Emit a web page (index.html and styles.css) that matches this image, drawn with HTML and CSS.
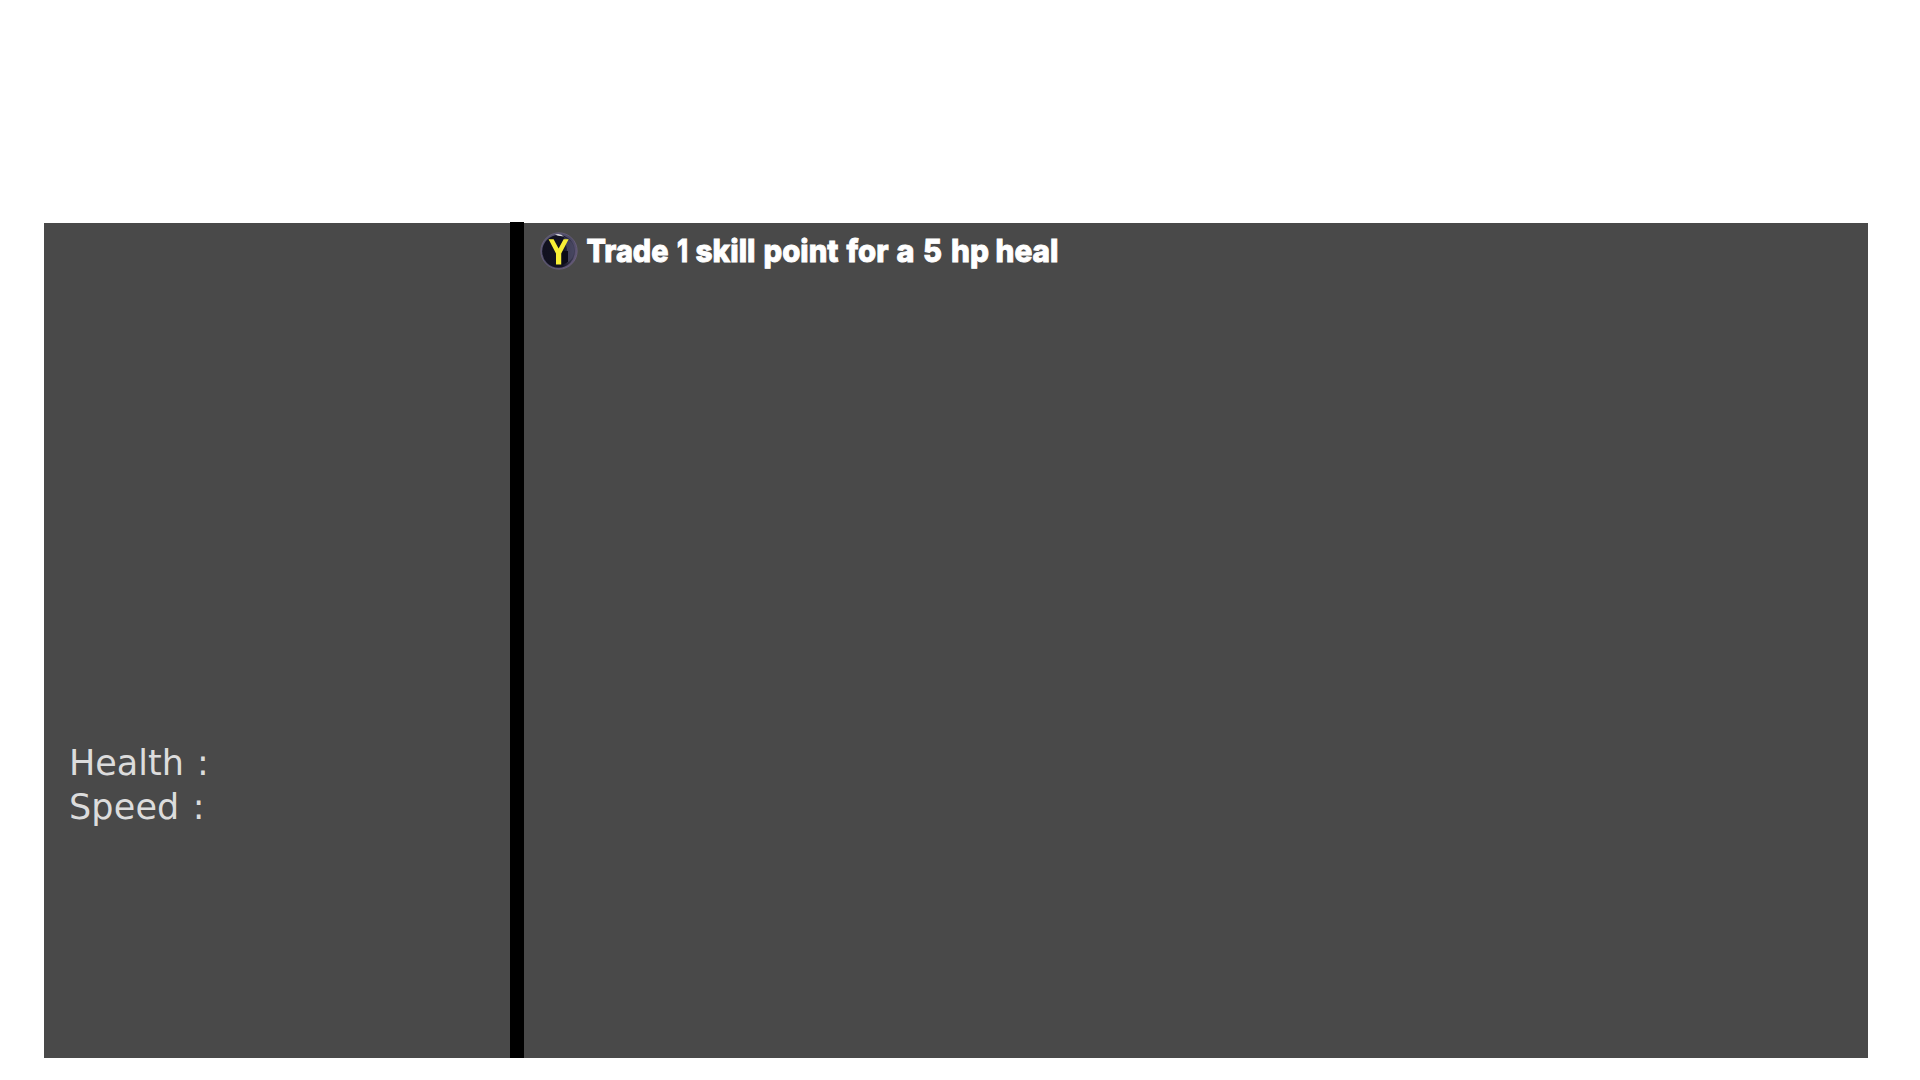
FILE: index.html
```html
<!DOCTYPE html>
<html lang="en">
<head>
<meta charset="utf-8">
<title>Skills</title>
<link rel="stylesheet" href="styles.css">
</head>
<body>
<main class="screen">
  <section class="stats">
    <p class="stat stat-health">Health :</p>
    <p class="stat">Speed :</p>
  </section>
  <div class="divider"></div>
  <section class="skills">
    <svg class="button-icon" viewBox="0 0 38 38" aria-label="Y button">
      <defs>
        <linearGradient id="rim" x1="0" y1="0" x2="1" y2="1">
          <stop offset="0" stop-color="#5e5c78"/>
          <stop offset=".5" stop-color="#4a4864"/>
          <stop offset="1" stop-color="#6a5b7c"/>
        </linearGradient>
        <linearGradient id="face" x1="0" y1="0" x2="1" y2="0">
          <stop offset="0" stop-color="#11111f"/>
          <stop offset=".62" stop-color="#121222"/>
          <stop offset="1" stop-color="#44425b"/>
        </linearGradient>
      </defs>
      <circle cx="19" cy="19" r="18.2" fill="url(#rim)" stroke="#69607b" stroke-width=".8"/>
      <circle cx="18.6" cy="19.3" r="16.4" fill="url(#face)"/>
      <path d="M24 5Q35 9 34 20Q33 28 27 31V17Z" fill="#4b4964" opacity=".75"/>
      <path d="M22 19h6v11l-6 3z" fill="#0c0c18"/>
      <path d="M15 2.5Q20 .8 24 4.5L18 3.7Z" fill="#d9d9df"/>
      <path d="M8.6 7.2h5L18.6 16.5 23.6 7.2H28.6L21.2 21.5V32.6H16V21.5Z" fill="#f8ef36"/>
    </svg>
    <svg class="prompt" viewBox="0 0 480 42">
      <text x="-0.5" y="32" textLength="82" lengthAdjust="spacingAndGlyphs">Trade</text>
      <text x="90" y="32" textLength="11" lengthAdjust="spacingAndGlyphs">1</text>
      <text x="108.5" y="32" textLength="60" lengthAdjust="spacingAndGlyphs">skill</text>
      <text x="176.5" y="32" textLength="75" lengthAdjust="spacingAndGlyphs">point</text>
      <text x="259.5" y="32" textLength="42" lengthAdjust="spacingAndGlyphs">for</text>
      <text x="309.5" y="32" textLength="18" lengthAdjust="spacingAndGlyphs">a</text>
      <text x="336" y="32" textLength="19" lengthAdjust="spacingAndGlyphs">5</text>
      <text x="364" y="32" textLength="38" lengthAdjust="spacingAndGlyphs">hp</text>
      <text x="408.5" y="32" textLength="63" lengthAdjust="spacingAndGlyphs">heal</text>
    </svg>
  </section>
</main>
</body>
</html>
```
FILE: styles.css
```css
body {
  margin: 0;
  background: #fff;
}

.screen {
  box-sizing: border-box;
  display: grid;
  grid-template-columns: 466px 14px 1fr;
  width: 1920px;
  height: 1080px;
  padding: 223px 52px 22px 44px;
  overflow: hidden;
}

.stats,
.skills {
  background: #494949;
}

.stats {
  box-sizing: border-box;
  padding: 518px 0 0 25px;
}

.stat {
  margin: 0;
  font: 35px/44px Verdana, "DejaVu Sans", sans-serif;
  letter-spacing: 0.15px;
  word-spacing: 2px;
  color: #dcdcdc;
}

.stat-health {
  letter-spacing: 0;
}

.divider {
  margin-top: -1px;
  background: #000;
}

.skills {
  display: flex;
  align-items: flex-start;
  padding: 9px 0 0 16px;
}

.button-icon {
  width: 38px;
  height: 38px;
}

.prompt {
  width: 480px;
  height: 42px;
  margin: -2px 0 0 9px;
  overflow: visible;
}

.prompt text {
  font: 800 31.5px Inter, sans-serif;
  fill: #fff;
  stroke: #fff;
  stroke-width: 0.9px;
  stroke-linejoin: miter;
}
```
